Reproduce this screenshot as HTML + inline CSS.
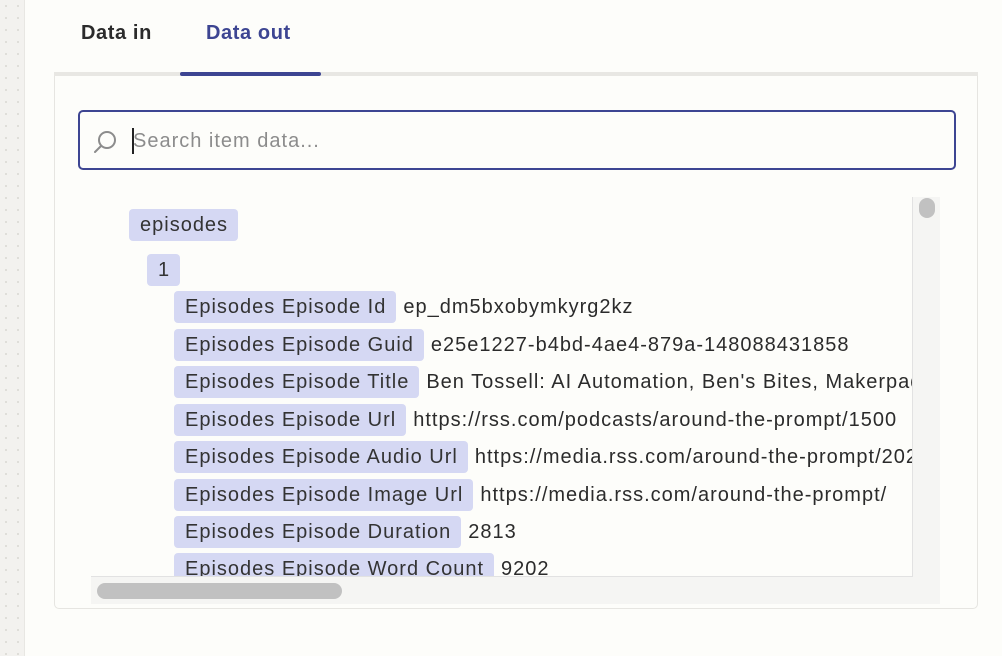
<!DOCTYPE html>
<html><head><style>
*{margin:0;padding:0;box-sizing:border-box}
body{width:1002px;height:656px;overflow:hidden;background:#fdfdfa;font-family:"Liberation Sans",sans-serif;position:relative;color:#2b2b2b}
.strip{position:absolute;left:0;top:0;width:25px;height:656px;background-color:#f3f2ef;background-image:radial-gradient(#d8d7d2 0.8px,transparent 1px);background-size:12px 12px;border-right:1px solid #e8e7e3}
.tab{position:absolute;top:22px;font-size:20px;font-weight:bold;letter-spacing:0.6px}
.panel{position:absolute;left:54px;top:73px;width:924px;height:536px;border:1px solid #e6e5e1;border-top:none;border-radius:0 0 5px 5px}
.gline{position:absolute;left:54px;top:72px;width:924px;height:4px;background:#e8e7e3}
.uline{position:absolute;left:180px;top:72px;width:141px;height:4px;background:#3d4592;border-radius:2px}
.search{position:absolute;left:78px;top:110px;width:878px;height:60px;border:2px solid #3d4592;border-radius:5px}
.ph{position:absolute;left:133px;top:130px;font-size:20px;letter-spacing:1px;color:#8c8c8c}
.caret{position:absolute;left:132px;top:128px;width:2px;height:26px;background:#222}
.view{position:absolute;left:91px;top:197px;width:822px;height:380px;overflow:hidden;border-right:1px solid #e2e2e2;border-bottom:1px solid #e2e2e2}
.vs{position:absolute;left:913px;top:197px;width:27px;height:407px;background:#f5f5f3}
.hs{position:absolute;left:91px;top:577px;width:849px;height:27px;background:#f5f5f3}
.vt{position:absolute;left:919px;top:198px;width:16px;height:20px;background:#c1c1c1;border-radius:8px}
.ht{position:absolute;left:97px;top:583px;width:245px;height:16px;background:#c1c1c1;border-radius:8px}
.row{position:absolute;white-space:nowrap;font-size:20px;letter-spacing:1px;line-height:32px}
.tag{display:inline-block;background:#d5d8f3;border-radius:4px;padding:0 10px 0 11px;height:32px;margin-right:7px;color:#333}
</style></head><body>
<div class="strip"></div>
<div class="tab" style="left:81px;color:#2b2b2b">Data in</div>
<div class="tab" style="left:206px;color:#3d4592">Data out</div>
<div class="panel"></div>
<div class="gline"></div>
<div class="uline"></div>
<div class="search"></div>
<svg style="position:absolute;left:92px;top:129px" width="28" height="26" viewBox="0 0 28 26"><circle cx="15" cy="11" r="8" fill="none" stroke="#8c8c8c" stroke-width="2"/><path d="M9 17 L3 23" stroke="#8c8c8c" stroke-width="2" stroke-linecap="round"/></svg>
<div class="ph">Search item data...</div>
<div class="caret"></div>
<div class="vs"></div><div class="hs"></div>
<div class="view">
<div class="row" style="left:38px;top:12px"><span class="tag">episodes</span></div>
<div class="row" style="left:56px;top:57px"><span class="tag">1</span></div>
<div class="row" style="left:83px;top:94px"><span class="tag">Episodes Episode Id</span>ep_dm5bxobymkyrg2kz</div>
<div class="row" style="left:83px;top:132px"><span class="tag">Episodes Episode Guid</span>e25e1227-b4bd-4ae4-879a-148088431858</div>
<div class="row" style="left:83px;top:169px"><span class="tag">Episodes Episode Title</span>Ben Tossell: AI Automation, Ben's Bites, Makerpad</div>
<div class="row" style="left:83px;top:207px"><span class="tag">Episodes Episode Url</span>https://rss.com/podcasts/around-the-prompt/1500</div>
<div class="row" style="left:83px;top:244px"><span class="tag">Episodes Episode Audio Url</span>https://media.rss.com/around-the-prompt/2024</div>
<div class="row" style="left:83px;top:282px"><span class="tag">Episodes Episode Image Url</span>https://media.rss.com/around-the-prompt/</div>
<div class="row" style="left:83px;top:319px"><span class="tag">Episodes Episode Duration</span>2813</div>
<div class="row" style="left:83px;top:356px"><span class="tag">Episodes Episode Word Count</span>9202</div>
</div>
<div class="vt"></div><div class="ht"></div>
</body></html>
